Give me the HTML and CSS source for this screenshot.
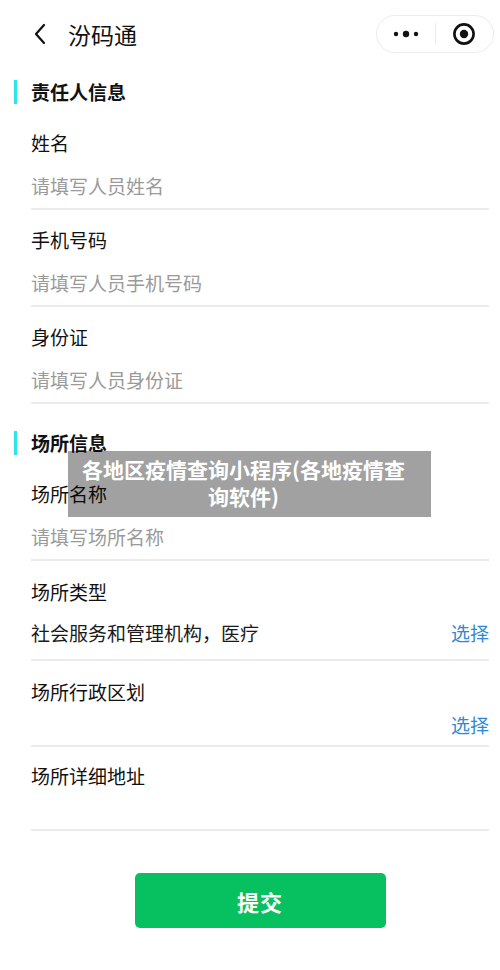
FILE: index.html
```html
<!DOCTYPE html>
<html lang="zh-CN">
<head>
<meta charset="utf-8">
<title>汾码通</title>
<link rel="stylesheet" href="styles.css">
</head>
<body>
<div class="page">
  <header class="nav">
    <div class="nav-left">
      <svg class="back" width="14" height="22" viewBox="0 0 14 22"><path d="M11 2 L3 11 L11 20" fill="none" stroke="#111" stroke-width="2.2" stroke-linecap="round" stroke-linejoin="round"/></svg>
      <span class="nav-title">汾码通</span>
    </div>
    <div class="capsule">
      <div class="capsule-btn">
        <svg width="26" height="8" viewBox="0 0 26 8"><circle cx="3" cy="4" r="2.2" fill="#111"/><circle cx="13" cy="4" r="3.2" fill="#111"/><circle cx="23" cy="4" r="2.2" fill="#111"/></svg>
      </div>
      <div class="capsule-sep"></div>
      <div class="capsule-btn">
        <svg width="24" height="24" viewBox="0 0 24 24"><circle cx="12" cy="12" r="9.6" fill="none" stroke="#111" stroke-width="2.6"/><circle cx="12" cy="12" r="4.2" fill="#111"/></svg>
      </div>
    </div>
  </header>

  <main class="form">
    <section class="group">
      <h2 class="group-title">责任人信息</h2>
      <div class="field">
        <div class="field-label">姓名</div>
        <div class="field-row placeholder">请填写人员姓名</div>
      </div>
      <div class="field">
        <div class="field-label">手机号码</div>
        <div class="field-row placeholder">请填写人员手机号码</div>
      </div>
      <div class="field">
        <div class="field-label">身份证</div>
        <div class="field-row placeholder">请填写人员身份证</div>
      </div>
    </section>

    <section class="group group-second">
      <h2 class="group-title">场所信息</h2>
      <div class="field">
        <div class="field-label">场所名称</div>
        <div class="field-row placeholder">请填写场所名称</div>
      </div>
      <div class="field field-type">
        <div class="field-label">场所类型</div>
        <div class="field-row">
          <span class="value">社会服务和管理机构，医疗</span>
          <span class="link">选择</span>
        </div>
      </div>
      <div class="field field-region">
        <div class="field-label">场所行政区划</div>
        <div class="field-row">
          <span class="value"></span>
          <span class="link">选择</span>
        </div>
      </div>
      <div class="field field-address">
        <div class="field-label">场所详细地址</div>
        <div class="field-area"></div>
      </div>
    </section>

    <div class="actions">
      <button class="submit" type="button">提交</button>
    </div>
  </main>

  <div class="watermark">各地区疫情查询小程序(各地疫情查<br>询软件)</div>
</div>
</body>
</html>
```
FILE: styles.css
```css
* { box-sizing: border-box; }
html, body { margin: 0; padding: 0; background: #fff; }
body {
  font-family: "Noto Sans CJK SC", "Noto Sans", sans-serif;
  color: #111;
}
.page {
  position: relative;
  width: 500px;
  height: 970px;
  overflow: hidden;
  background: #fff;
}

/* nav */
.nav {
  height: 68px;
  display: flex;
  align-items: center;
  justify-content: space-between;
  padding: 0 6px 0 33px;
}
.nav-left {
  display: flex;
  align-items: center;
}
.back { display: block; }
.nav-title {
  margin-left: 21px;
  font-size: 23px;
  line-height: 30px;
  color: #111;
}
.capsule {
  width: 118px;
  height: 38px;
  border: 1px solid #ececec;
  border-radius: 19px;
  display: flex;
  align-items: center;
  background: #fff;
}
.capsule-btn {
  flex: 1;
  display: flex;
  align-items: center;
  justify-content: center;
}
.capsule-btn svg { display: block; }
.capsule-sep {
  width: 1px;
  height: 22px;
  background: #ececec;
}

/* form */
.group-title {
  margin: 12px 0 9px 14px;
  padding-left: 14px;
  border-left: 3px solid #2ee3ea;
  font-size: 19px;
  line-height: 24px;
  font-weight: 700;
  color: #111;
}
.group-second .group-title { margin-top: 27px; }

.field {
  margin: 0 11px 0 31px;
  padding: 18px 0 10px;
  border-bottom: 2px solid #ebebeb;
}
.field-label {
  font-size: 19px;
  line-height: 24px;
  color: #111;
}
.field-row {
  margin-top: 19px;
  font-size: 19px;
  line-height: 24px;
  display: flex;
  justify-content: space-between;
  align-items: center;
}
.placeholder { color: #9a9a9a; }
.value { color: #1a1a1a; }
.link { color: #2f89d4; }

.field-type { padding: 19px 0 14px; }
.field-type .field-row { margin-top: 17px; }
.field-region { padding: 19px 0 8px; }
.field-region .field-row { margin-top: 9px; }
.field-address { padding: 17px 0 0; }
.field-area { height: 41px; }

.actions {
  margin: 42px 11px 0 31px;
  display: flex;
  justify-content: center;
}
.submit {
  width: 251px;
  height: 55px;
  border: 0;
  border-radius: 5px;
  background: #07c160;
  color: #fff;
  font-family: "Noto Sans CJK SC", "Noto Sans", sans-serif;
  font-size: 22px;
  font-weight: 700;
  letter-spacing: 1px;
}

/* overlay caption */
.watermark {
  position: absolute;
  left: 68px;
  top: 451px;
  width: 363px;
  height: 66px;
  padding: 5px 12px 0 0;
  background: rgba(0, 0, 0, 0.37);
  color: #fff;
  font-size: 21px;
  line-height: 27px;
  font-weight: 700;
  text-align: center;
}
```
